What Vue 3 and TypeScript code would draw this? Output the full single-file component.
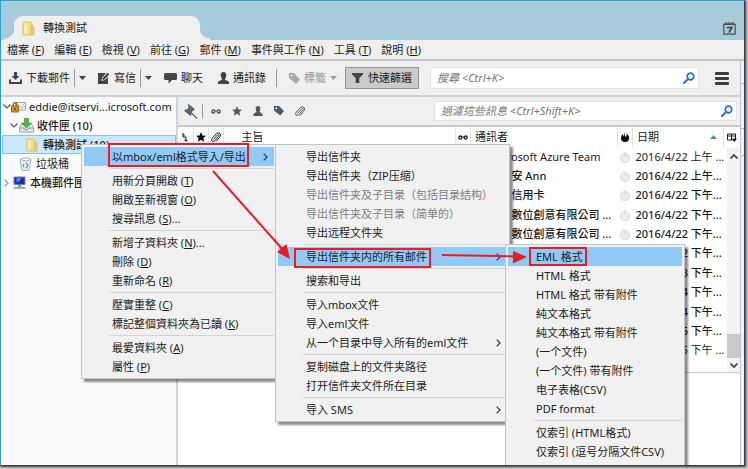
<script setup lang="ts">
interface Entry {
  label: string
  key?: string
  tail?: string
  sub?: boolean
  off?: boolean
  active?: boolean
}
interface Mail {
  from: string
  date: string
  unread: boolean
  wide?: boolean
}

const menubar: Entry[] = [
  { label: '檔案', key: 'F' },
  { label: '編輯', key: 'E' },
  { label: '檢視', key: 'V' },
  { label: '前往', key: 'G' },
  { label: '郵件', key: 'M' },
  { label: '事件與工作', key: 'N' },
  { label: '工具', key: 'T' },
  { label: '說明', key: 'H' },
]

const folderMenu: Entry[][] = [
  [{ label: '以mbox/eml格式导入/导出', sub: true, active: true }],
  [
    { label: '用新分頁開啟', key: 'T' },
    { label: '開啟至新視窗', key: 'O' },
    { label: '搜尋訊息', key: 'S', tail: '...' },
  ],
  [
    { label: '新增子資料夾', key: 'N', tail: '...' },
    { label: '刪除', key: 'D' },
    { label: '重新命名', key: 'R' },
  ],
  [
    { label: '壓實重整', key: 'C' },
    { label: '標記整個資料夾為已讀', key: 'K' },
  ],
  [
    { label: '最愛資料夾', key: 'A' },
    { label: '屬性', key: 'P' },
  ],
]

const exportMenu: Entry[][] = [
  [
    { label: '导出信件夹' },
    { label: '导出信件夹（ZIP压缩）' },
    { label: '导出信件夹及子目录（包括目录结构）', off: true },
    { label: '导出信件夹及子目录（简单的）', off: true },
    { label: '导出远程文件夹' },
  ],
  [{ label: '导出信件夹内的所有邮件', sub: true, active: true }],
  [{ label: '搜索和导出' }],
  [{ label: '导入mbox文件' }, { label: '导入eml文件' }, { label: '从一个目录中导入所有的eml文件', sub: true }],
  [{ label: '复制磁盘上的文件夹路径' }, { label: '打开信件夹文件所在目录' }],
  [{ label: '导入 SMS', sub: true }],
]

const formatMenu: Entry[][] = [
  [
    { label: 'EML 格式', active: true },
    { label: 'HTML 格式' },
    { label: 'HTML 格式 带有附件' },
    { label: '純文本格式' },
    { label: '純文本格式 带有附件' },
    { label: '(一个文件)' },
    { label: '(一个文件) 带有附件' },
    { label: '电子表格(CSV)' },
    { label: 'PDF format' },
  ],
  [{ label: '仅索引 (HTML格式)' }, { label: '仅索引 (逗号分隔文件CSV)' }],
]

const menus = [
  { name: 'folder', groups: folderMenu },
  { name: 'export', groups: exportMenu },
  { name: 'format', groups: formatMenu },
]

const mails: Mail[] = [
  { from: 'Microsoft Azure Team', date: '2016/4/22 上午 ...', unread: false, wide: true },
  { from: '安 Ann', date: '2016/4/22 上午...', unread: true },
  { from: '信用卡', date: '2016/4/22 下午...', unread: true },
  { from: '數位創意有限公司 ...', date: '2016/4/22 下午...', unread: true },
  { from: '數位創意有限公司 ...', date: '2016/4/22 下午...', unread: true },
  { from: '', date: '2016/4/22 下午...', unread: true },
  { from: '', date: '2016/4/23 下午...', unread: true },
  { from: '', date: '2016/4/24 下午...', unread: true },
  { from: '', date: '2016/4/24 下午...', unread: true },
  { from: '', date: '2016/4/25 下午...', unread: true },
  { from: '', date: '2016/4/25 下午 ...', unread: false },
]
</script>

<template>
  <div class="screen">
    <div class="window">
      <header class="titlebar">
        <div class="tab">
          <svg class="folder" width="14" height="15" viewBox="0 0 14 15">
            <path d="M1 1h8l1 1v12H1z" fill="#f3dc8a" stroke="#dfc36c" />
            <path d="M9 5l3 1v8H9z" fill="#e8cb6c" stroke="#d5b455" stroke-width=".7" />
            <path d="M2 2h3v11H2z" fill="#fbedb0" />
          </svg>
          <span>轉換測試</span>
        </div>
        <svg class="calendar" width="13" height="13" viewBox="0 0 13 13">
          <path d="M.8 2.500h11.400v9.700H.8z" fill="none" stroke="#4d5154" stroke-width="1.200" />
          <path d="M1 1.800h11M3 0v3M5.300 0v3M7.700 0v3M10 0v3" stroke="#4d5154" />
          <path d="M3.800 5.500h5L6 10.500" fill="none" stroke="#3d4144" stroke-width="1.700" />
        </svg>
      </header>

      <nav class="menubar">
        <button v-for="m in menubar" :key="m.label" type="button">{{ m.label }} (<u>{{ m.key }}</u>)</button>
      </nav>

      <div class="body">
        <div class="page">
          <div class="toolbar">
            <button type="button" class="tool">
              <svg width="13" height="12" viewBox="0 0 13 12">
                <path d="M5 0h3v4h2.500l-4 4-4-4H5z" fill="#444" />
                <path d="M1 7.500v3.500h11V7.500" fill="none" stroke="#444" stroke-width="2" />
              </svg>
              下載郵件
            </button>
            <i class="rule" />
            <button type="button" class="drop" aria-label="下載選項"><svg width="7" height="4" viewBox="0 0 7 4"><path d="M0 0h7L3.500 4z" /></svg></button>
            <button type="button" class="tool">
              <svg width="12" height="12" viewBox="0 0 12 12">
                <path d="M0 1h8L4 6l-.5 3L7 8l3-3v7H0z" fill="#444" />
                <path d="M5 7.500L10.500 1.500" stroke="#444" stroke-width="2.200" />
              </svg>
              寫信
            </button>
            <i class="rule" />
            <button type="button" class="drop" aria-label="寫信選項"><svg width="7" height="4" viewBox="0 0 7 4"><path d="M0 0h7L3.500 4z" /></svg></button>
            <button type="button" class="tool chat">
              <svg width="13" height="12" viewBox="0 0 13 12">
                <path d="M1.500 1h10q1.500 0 1.500 1.500v4Q13 8 11.500 8H8L4.500 11.500V8h-3Q0 8 0 6.500v-4Q0 1 1.500 1z" fill="#444" />
              </svg>
              聊天
            </button>
            <button type="button" class="tool people">
              <svg width="11" height="12" viewBox="0 0 11 12">
                <path d="M5.500 0C8 0 8.500 2 8.200 4 8 5.500 7 6.500 7 7.500c0 1 4 1 4 3V12H0v-1.500c0-2 4-2 4-3 0-1-1-2-1.200-3.500C2.500 2 3 0 5.500 0z" fill="#444" />
              </svg>
              通訊錄
            </button>
            <i class="rule" />
            <button type="button" class="tool tag" disabled>
              <svg width="11" height="11" viewBox="0 0 11 11">
                <path d="M0 0h5l6 6.500L7 11 0 5z" fill="#aaa" /><circle cx="2.500" cy="2.500" r="1" fill="#efefef" />
              </svg>
              標籤
              <svg class="faded" width="7" height="4" viewBox="0 0 7 4"><path d="M0 0h7L3.500 4z" /></svg>
            </button>
            <button type="button" class="filter">
              <svg width="11" height="10" viewBox="0 0 11 10"><path d="M0 0h11v1.500L7.300 5v5H3.700V5L0 1.500z" fill="#444" /></svg>
              快速篩選
            </button>
            <label class="search">
              <input type="search" aria-label="搜尋" placeholder="搜尋 <Ctrl+K>" />
              <svg width="12" height="12" viewBox="0 0 12 12">
                <circle cx="7.500" cy="4.500" r="3.300" fill="#e6f2fb" stroke="#2e75b5" stroke-width="1.700" />
                <path d="M5 7L1 11" stroke="#2e75b5" stroke-width="2" stroke-linecap="round" />
              </svg>
            </label>
            <button type="button" class="burger" aria-label="選單"><i /><i /><i /></button>
          </div>

          <div class="main">
            <aside class="folders">
              <div class="node root">
                <svg width="8" height="5" viewBox="0 0 8 5"><path d="M.5 .5L4 4 7.500 .5" fill="none" stroke="#555" stroke-width="1.200" /></svg>
                <svg width="15" height="13" viewBox="0 0 15 13">
                  <path d="M4.500 2.500h10v7.500h-10z" fill="#fbfaf6" stroke="#a9a39a" />
                  <path d="M5 3l4.500 4L14 3M8 10l6-4" fill="none" stroke="#b9b2a6" />
                  <path d="M2.300 6V4.500q0-1.700 1.700-1.700t1.700 1.700V6" fill="none" stroke="#9b6a20" stroke-width="1.400" />
                  <path d="M.5 6h7v6h-7z" fill="#d08d2c" stroke="#a0661a" />
                  <path d="M3 8h2v2H3z" fill="#8a5210" />
                </svg>
                <span>eddie@itservi...icrosoft.com</span>
              </div>
              <div class="node inbox">
                <svg width="8" height="5" viewBox="0 0 8 5"><path d="M.5 .5L4 4 7.500 .5" fill="none" stroke="#555" stroke-width="1.200" /></svg>
                <svg width="15" height="15" viewBox="0 0 15 15">
                  <path d="M3 5h9l2.500 5v4H.5v-4z" fill="#e4e8ea" stroke="#9ca4a8" />
                  <path d="M1 10h4l1 1.500h3l1-1.500h4" fill="none" stroke="#8d9599" />
                  <path d="M5.500 .5h4v5H12l-4.500 4.500L3 5.500h2.500z" fill="#4db848" stroke="#2f8f2d" stroke-width=".7" />
                </svg>
                <span>收件匣 (10)</span>
              </div>
              <div class="node picked">
                <svg width="13" height="14" viewBox="0 0 14 15">
                  <path d="M1 1h8l1 1v12H1z" fill="#f3dc8a" stroke="#dfc36c" />
                  <path d="M9 5l3 1v8H9z" fill="#e8cb6c" stroke="#d5b455" stroke-width=".7" />
                  <path d="M2 2h3v11H2z" fill="#fbedb0" />
                </svg>
                <span>轉換測試 (10)</span>
              </div>
              <div class="node trash">
                <svg width="13" height="14" viewBox="0 0 13 14">
                  <path d="M1 2.500l2 11h7l2-11z" fill="#e9f0f3" stroke="#a5b1b7" />
                  <path d="M1 2.500L4 1h6l2 1.500-5 1.500z" fill="#f7fafb" stroke="#a5b1b7" />
                  <circle cx="6.500" cy="8.500" r="2.200" fill="none" stroke="#59a5d8" stroke-width="1.400" stroke-dasharray="3.200 1.400" />
                </svg>
                <span>垃圾桶</span>
              </div>
              <div class="node local">
                <svg width="5" height="8" viewBox="0 0 5 8"><path d="M.5 .5L4 4 .5 7.500" fill="none" stroke="#999" stroke-width="1.200" /></svg>
                <svg width="13" height="13" viewBox="0 0 13 13">
                  <path d="M1 1h11v7.500H1z" fill="#1733b4" stroke="#7d838b" />
                  <path d="M4 2h4L6.500 5.500H3z" fill="#5f86ee" />
                  <path d="M5 9h3v1.500H5z" fill="#7b8086" />
                  <path d="M2 11h9l1.500 1.500H.5z" fill="#aeb3b8" stroke="#7b8086" stroke-width=".5" />
                </svg>
                <span>本機郵件匣</span>
              </div>
            </aside>

            <section class="content">
              <div class="quick">
                <svg width="14" height="15" viewBox="0 0 14 15">
                  <path d="M4.500 .5l6 5-2 .7-1.500 2.800-.5 2.500L.5 6.500l2.700-.7L5 3.500z" fill="#5a6670" />
                  <path d="M7 8.500l6 6" stroke="#5a6670" stroke-width="1.200" />
                </svg>
                <i class="rule" />
                <svg width="10" height="5" viewBox="0 0 10 5"><circle cx="2.300" cy="2.500" r="1.500" stroke-width="1.400" /><circle cx="7.700" cy="2.500" r="1.500" stroke-width="1.400" /><path d="M4 2h2" /></svg>
                <svg width="10" height="10" viewBox="0 0 10 10"><path d="M5 0l1.400 3.400L10 3.700 7.300 6l.9 3.700L5 7.800 1.800 9.700 2.700 6 0 3.700l3.600-.3z" fill="#4d5a66" stroke="none" /></svg>
                <svg width="10" height="10" viewBox="0 0 11 12"><path d="M5.500 0C8 0 8.500 2 8.200 4 8 5.500 7.500 6 7.500 7c0 1 3.500 1.500 3.500 3.500V12H0v-1.500C0 8.500 3.500 8 3.500 7c0-1-.5-1.500-.7-3C2.500 2 3 0 5.500 0z" fill="#4d5a66" stroke="none" /></svg>
                <svg width="10" height="10" viewBox="0 0 11 11"><path d="M0 0h5.500L11 5.500 7 10.500 0 5z" fill="#4d5a66" stroke="none" /><circle cx="2.500" cy="2.500" r="1" fill="#efefef" stroke="none" /></svg>
                <svg width="10" height="11" viewBox="0 0 10 11"><path d="M2.500 7.500L6.500 3q1-1 1.500-.2t-.5 1.700L3.500 9Q2 10 1 9t.3-3L5.500 1.500Q7.500 0 9 1.500t-.5 4L5 9.500" /></svg>
                <label class="search">
                  <input type="search" aria-label="過濾這些訊息" placeholder="過濾這些訊息 <Ctrl+Shift+K>" />
                  <svg width="12" height="12" viewBox="0 0 12 12">
                    <circle cx="7.500" cy="4.500" r="3.300" fill="#e6f2fb" stroke="#2e75b5" stroke-width="1.700" />
                    <path d="M5 7L1 11" stroke="#2e75b5" stroke-width="2" stroke-linecap="round" />
                  </svg>
                </label>
              </div>

              <div class="list">
                <table>
                  <colgroup>
                    <col class="c-icon" /><col class="c-icon" /><col class="c-icon" /><col />
                    <col class="c-icon" /><col class="c-from" /><col class="c-icon" /><col class="c-date" />
                  </colgroup>
                  <thead>
                    <tr>
                      <th><svg width="6" height="9" viewBox="0 0 6 9"><path d="M1 0v4h3v4M1 2h2M2.500 6.500L4 8.500 5.500 7" fill="none" stroke="#111" /></svg></th>
                      <th><svg width="10" height="10" viewBox="0 0 10 10"><path d="M5 0l1.400 3.400L10 3.700 7.300 6l.9 3.700L5 7.800 1.800 9.700 2.700 6 0 3.700l3.600-.3z" /></svg></th>
                      <th><svg width="10" height="11" viewBox="0 0 10 11"><path d="M2.500 7.500L6.500 3q1-1 1.500-.2t-.5 1.700L3.500 9Q2 10 1 9t.3-3L5.500 1.500Q7.500 0 9 1.500t-.5 4L5 9.500" fill="none" stroke="#222" /></svg></th>
                      <th class="subject">主旨</th>
                      <th><svg width="10" height="5" viewBox="0 0 10 5"><path d="M4 2h2" stroke="#222" /><circle cx="2.300" cy="2.500" r="1.500" fill="none" stroke="#222" stroke-width="1.300" /><circle cx="7.700" cy="2.500" r="1.500" fill="none" stroke="#222" stroke-width="1.300" /></svg></th>
                      <th class="text">通訊者</th>
                      <th><svg width="8" height="10" viewBox="0 0 8 10"><path d="M4 0Q3 3 4.500 5 6 4 5.500 1.500 8 3.500 8 6q0 4-4 4T0 6q0-3 2-4 0 2 1 2.500Q2.500 2 4 0z" /></svg></th>
                      <th class="text">日期<svg class="sort" width="7" height="4" viewBox="0 0 7 4"><path d="M0 4h7L3.500 0z" fill="#3f8fc0" /></svg></th>
                    </tr>
                  </thead>
                  <tbody>
                    <tr v-for="(m, i) in mails" :key="i" :class="{ unread: m.unread }">
                      <td colspan="5" />
                      <td class="from" :class="{ wide: m.wide }">{{ m.from }}</td>
                      <td class="dot"><svg width="10" height="12" viewBox="0 0 10 12"><path d="M4.500 1Q4 4 5 6 6.500 5 6 2.200 9.500 4 9.500 7q0 4.500-4.500 4.500T.5 7q0-3 2-4.500" fill="#ededed" stroke="#d2d2d2" stroke-width=".8" /></svg></td>
                      <td class="date">{{ m.date }}</td>
                    </tr>
                  </tbody>
                </table>
                <div class="scroller">
                  <svg class="picker" width="10" height="9" viewBox="0 0 10 9"><path d="M.5 1h8v6h-8zM.5 3h8M4.500 1v6" fill="none" stroke="#222" /><path d="M5 5.500h5L7.500 9z" fill="#222" /></svg>
                  <div class="track">
                    <svg width="8" height="5" viewBox="0 0 8 5"><path d="M.5 4.500L4 1l3.500 3.500" fill="none" stroke="#444" stroke-width="1.700" /></svg>
                    <i class="thumb" />
                    <svg width="8" height="5" viewBox="0 0 8 5"><path d="M.5 .5L4 4 7.500 .5" fill="none" stroke="#444" stroke-width="1.700" /></svg>
                  </div>
                </div>
              </div>
              <div class="preview" />
            </section>
          </div>
        </div>
        <div class="edge"><i /><i /><i /></div>
      </div>

      <ul v-for="menu in menus" :key="menu.name" class="menu" :class="menu.name" role="menu">
        <li v-for="(group, g) in menu.groups" :key="g" class="group" role="none">
          <button
            v-for="e in group"
            :key="e.label"
            type="button"
            role="menuitem"
            :disabled="e.off"
            :class="{ active: e.active }"
          >
            <span>{{ e.label }}<template v-if="e.key"> (<u>{{ e.key }}</u>){{ e.tail }}</template></span>
            <svg v-if="e.sub" width="5" height="8" viewBox="0 0 5 8"><path d="M.7 .7L4 4 .7 7.300" fill="none" stroke="#333" stroke-width="1.200" /></svg>
          </button>
        </li>
      </ul>

      <svg class="marks" width="748" height="469" viewBox="0 0 748 469">
        <g fill="none" stroke="#ed1c24" stroke-width="2">
          <path d="M109 144h139v22H109zM295 249h135v18H295zM530 248h56v17h-56z" />
          <path d="M213 171l71 80M442 255l75 1.500" />
        </g>
        <path d="M290 259l-13-7 9.500-8zM527 257l-14 6.500v-12.500z" fill="#ed1c24" />
      </svg>
    </div>
  </div>
</template>

<style>
body {
  margin: 0;
}
</style>

<style scoped>
.screen {
  box-sizing: border-box;
  display: flex;
  min-height: 100vh;
  padding: 0 4px 4px 0;
  background: #d2d2d2;
  color: #1c1c1c;
  font-family: "Noto Sans", "Noto Sans CJK TC", sans-serif;
  font-size: 11px;
  line-height: 16px;
}
.window {
  position: relative;
  display: flex;
  flex: 1;
  flex-direction: column;
  min-width: 0;
  overflow: hidden;
  border-top: 1px solid #26a5c9;
  border-left: 1px solid #26a5c9;
  background: #efefef;
  box-shadow: 1px 1px 2px 1px #333;
}
button {
  padding: 0;
  border: 0;
  background: none;
  color: inherit;
  font: inherit;
  white-space: nowrap;
}
svg {
  flex: none;
}
u {
  text-underline-offset: 1px;
}
.titlebar {
  display: flex;
  align-items: flex-end;
  justify-content: space-between;
  height: 39px;
  padding: 0 8px 0 13px;
  background: #a8cbdb;
}
.tab {
  position: relative;
  box-sizing: border-box;
  display: flex;
  align-items: center;
  gap: 7px;
  width: 186px;
  height: 24px;
  padding-left: 8px;
  border-radius: 9px 9px 0 0;
  background: #efefef;
}
.tab::before,
.tab::after {
  position: absolute;
  bottom: 0;
  width: 10px;
  height: 12px;
  content: "";
}
.tab::before {
  left: -10px;
  background: radial-gradient(circle at 0 0, transparent 10px, #efefef 11px);
}
.tab::after {
  right: -10px;
  background: radial-gradient(circle at 100% 0, transparent 10px, #efefef 11px);
}
.calendar {
  margin-bottom: 5px;
}
.menubar {
  display: flex;
  gap: 10px;
  height: 19px;
  padding-left: 6px;
  border-bottom: 2px solid #c4c4c4;
}
.body {
  display: flex;
  flex: 1;
}
.page {
  display: flex;
  flex: 1;
  flex-direction: column;
  min-width: 0;
}
.toolbar {
  display: flex;
  align-items: center;
  height: 34px;
  padding: 0 11px 0 8px;
  border-bottom: 2px solid #d0d0d0;
}
.tool {
  display: flex;
  align-items: center;
  gap: 4px;
}
.rule {
  width: 1px;
  height: 18px;
  margin: 0 4px;
  background: #999;
}
.drop {
  display: flex;
  align-items: center;
  margin-right: 12px;
}
.drop path {
  fill: #2c4a5c;
}
.people {
  margin: 0 6px 0 15px;
}
.tag {
  margin-left: 8px;
  color: #999;
}
.faded path {
  fill: #93a5af;
}
.filter {
  display: flex;
  align-items: center;
  gap: 5px;
  height: 22px;
  margin-left: 8px;
  padding: 0 6px;
  border: 1px solid #959595;
  background: #cbcbcb;
}
.search {
  display: flex;
  flex: 1;
  align-items: center;
  min-width: 0;
  height: 20px;
  padding: 0 3px 0 6px;
  border: 1px solid #e2e2e2;
  background: #fff;
}
.search input {
  flex: 1;
  min-width: 0;
  padding: 0;
  border: 0;
  outline: 0;
  background: none;
  font: inherit;
  font-style: italic;
}
.search input::placeholder {
  color: #777;
  opacity: 1;
}
.toolbar .search {
  margin: 0 16px 0 11px;
}
.burger {
  display: flex;
  flex-direction: column;
  gap: 2px;
  width: 14px;
}
.burger i {
  height: 3px;
  border-radius: 1px;
  background: #3c3c3c;
}
.main {
  display: flex;
  flex: 1;
}
.folders {
  flex: none;
  width: 175px;
  background: #fafafa;
}
.node {
  box-sizing: border-box;
  display: flex;
  align-items: center;
  gap: 4px;
  height: 19px;
  margin-left: 1px;
  overflow: hidden;
  white-space: nowrap;
}
.root {
  gap: 0;
  padding-left: 1px;
}
.root span {
  margin-left: 3px;
}
.inbox {
  gap: 1px;
  padding-left: 8px;
  font-weight: 500;
}
.inbox span {
  margin-left: 2px;
}
.picked {
  padding-left: 23px;
  border: 1px solid #84c3f0;
  background: #cce8ff;
  font-weight: 500;
}
.trash {
  padding-left: 17px;
}
.local {
  padding-left: 2px;
  font-weight: 500;
}
.content {
  display: flex;
  flex: 1;
  flex-direction: column;
  min-width: 0;
  border-left: 2px solid #cdd3e0;
  background: #fff;
}
.quick {
  display: flex;
  align-items: center;
  gap: 11px;
  height: 28px;
  padding: 0 3px 0 6px;
  border-bottom: 2px solid #c8c8c8;
  background: #efefef;
}
.quick > svg {
  fill: none;
  stroke: #4d5a66;
}
.quick .rule {
  height: 14px;
  margin: 0 -3px 0 -7px;
}
.quick .search {
  max-width: 292px;
  height: 18px;
  margin-left: auto;
}
.list {
  display: flex;
  border-bottom: 1px solid #c3ccd8;
}
table {
  flex: 1;
  width: 100%;
  height: 233px;
  border-collapse: collapse;
  table-layout: fixed;
}
.c-icon {
  width: 15px;
}
.c-from {
  width: 147px;
}
.c-date {
  width: 91px;
}
th {
  height: 20px;
  padding: 0;
  border-right: 1px solid #e2e2e2;
  font-weight: 400;
  vertical-align: middle;
}
th svg {
  display: block;
  margin: 0 auto;
}
th.subject {
  padding-left: 18px;
  text-align: left;
}
th.text {
  padding-left: 4px;
  text-align: left;
}
th .sort {
  float: right;
  margin: 6px 6px 0 0;
}
td {
  padding: 0;
  white-space: nowrap;
}
.unread {
  font-weight: 500;
}
.from {
  padding-left: 41px;
}
.from.wide {
  padding-left: 18px;
}
.dot svg {
  display: block;
  margin: 0 auto;
}
td.date {
  padding-left: 3px;
}
.scroller {
  display: flex;
  flex-direction: column;
  width: 16px;
  height: 245px;
}
.picker {
  margin: 6px 3px;
}
.track {
  display: flex;
  flex: 1;
  flex-direction: column;
  align-items: center;
  justify-content: space-between;
  margin-left: 3px;
  padding: 6px 0 4px;
  background: #f3f3f3;
}
.thumb {
  width: 13px;
  height: 24px;
  margin: auto 0 5px;
  background: #c9c9c9;
}
.preview {
  flex: 1;
}
.edge {
  display: flex;
  flex-direction: column;
  width: 3px;
  border-left: 1px solid #b9c5d8;
  background: #eef1f7;
}
.edge i {
  height: 22px;
  border-bottom: 1px solid #b4bcca;
}
.edge i + i {
  height: 44px;
}
.edge i + i + i {
  height: 26px;
}
.menu {
  position: absolute;
  margin: 0;
  padding: 2px;
  border: 1px solid #c4c4c4;
  background: #f1f1f1;
  box-shadow: 3px 3px 2px rgba(0, 0, 0, 0.45);
  list-style: none;
}
.folder.menu {
  top: 143px;
  left: 80px;
  width: 190px;
}
.export.menu {
  top: 143px;
  left: 274px;
  width: 229px;
}
.format.menu {
  top: 243px;
  left: 504px;
  width: 174px;
  padding-bottom: 12px;
}
.export.menu,
.format.menu {
  font-family: "Noto Sans", "Noto Sans CJK SC", sans-serif;
}
.group + .group::before {
  display: block;
  height: 1px;
  margin: 2px 0 2px 25px;
  background: #d4d4d4;
  content: "";
}
.menu button {
  display: flex;
  align-items: center;
  justify-content: space-between;
  width: 100%;
  height: 19px;
  padding: 0 6px 0 28px;
}
.menu button:disabled {
  color: #808080;
}
.menu button.active {
  background: #91c9f7;
}
.marks {
  position: absolute;
  top: -1px;
  left: -1px;
  pointer-events: none;
}
</style>
